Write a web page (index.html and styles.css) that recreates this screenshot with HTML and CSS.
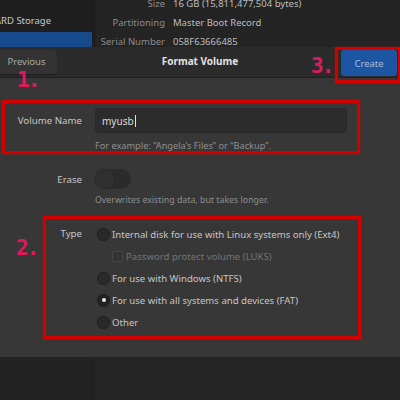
FILE: index.html
```html
<!DOCTYPE html>
<html>
<head>
<meta charset="utf-8">
<link rel="stylesheet" href="styles.css">
</head>
<body>
<div class="screen">
  <div class="under-top">
    <div class="side">
      <div class="side-item">ARD Storage</div>
      <div class="side-item selected"></div>
    </div>
    <div class="info">
      <div class="info-row"><span class="k">Size</span><span class="v">16 GB (15,811,477,504 bytes)</span></div>
      <div class="info-row"><span class="k">Partitioning</span><span class="v">Master Boot Record</span></div>
      <div class="info-row"><span class="k">Serial Number</span><span class="v">058F63666485</span></div>
    </div>
  </div>

  <div class="dialog">
    <div class="header">
      <div class="btn prev">Previous</div>
      <div class="title">Format Volume</div>
      <div class="btn create">Create</div>
    </div>
    <div class="body">
      <div class="row">
        <div class="label">Volume Name</div>
        <div class="entry">myusb<span class="caret"></span></div>
      </div>
      <div class="hint first">For example: “Angela’s Files” or “Backup”.</div>

      <div class="row erase">
        <div class="label">Erase</div>
        <div class="switch"><span class="knob"></span></div>
      </div>
      <div class="hint second">Overwrites existing data, but takes longer.</div>

      <div class="type">
        <div class="label type-label">Type</div>
        <div class="options">
          <div class="opt"><span class="radio"></span>Internal disk for use with Linux systems only (Ext4)</div>
          <div class="opt sub disabled"><span class="check"></span>Password protect volume (LUKS)</div>
          <div class="opt"><span class="radio"></span>For use with Windows (NTFS)</div>
          <div class="opt"><span class="radio on"></span>For use with all systems and devices (FAT)</div>
          <div class="opt"><span class="radio"></span>Other</div>
        </div>
      </div>
    </div>
  </div>

  <div class="under-bottom">
    <div class="side"></div>
    <div class="main"></div>
  </div>

  <div class="mark box1"></div>
  <div class="mark box2"></div>
  <div class="mark box3"></div>
  <div class="num n1">1.</div>
  <div class="num n2">2.</div>
  <div class="num n3">3.</div>
</div>
</body>
</html>
```

FILE: styles.css
```css
html, body {
  margin: 0;
  padding: 0;
  background: #252525;
}
.screen {
  position: relative;
  width: 400px;
  height: 400px;
  overflow: hidden;
  font-family: "Noto Sans", "DejaVu Sans", sans-serif;
}
.under-top {
  display: grid;
  grid-template-columns: 95px 1fr;
  height: 47px;
  overflow: hidden;
}
.under-top .side {
  background: #1f1f1f;
  border-right: 1px solid #1a1a1a;
  display: flex;
  flex-direction: column;
  justify-content: flex-end;
  padding-bottom: 2px;
}
.side-item {
  height: 17px;
  line-height: 17px;
  font-size: 9.5px;
  color: #c8c8c8;
  margin-left: -5px;
  padding-bottom: 3px;
}
.side-item.selected {
  background: #174a8c;
  margin-left: 0;
  margin-right: 2px;
  height: 17px;
  padding-bottom: 0;
}
.info {
  background: #242424;
  margin-top: -6px;
}
.info-row {
  display: flex;
  height: 19px;
  align-items: center;
  font-size: 9.5px;
}
.info-row .k {
  width: 70px;
  text-align: right;
  color: #8c8c8c;
  padding-right: 8px;
}
.info-row .v {
  color: #bdbdbd;
}

.dialog {
  background: #373737;
}
.header {
  height: 30px;
  background: #2b2b2b;
  border-bottom: 1px solid #1f1f1f;
  display: grid;
  grid-template-columns: 1fr auto 1fr;
  align-items: center;
}
.btn {
  font-size: 9.5px;
  border-radius: 4px;
  display: flex;
  align-items: center;
  justify-content: center;
}
.prev {
  justify-self: start;
  width: 61px;
  height: 24px;
  margin-left: -4px;
  margin-top: -1px;
  background: #333333;
  color: #a8a8a8;
  box-shadow: 0 1px 1px rgba(0,0,0,0.3);
}
.title {
  font-size: 10px;
  font-weight: bold;
  color: #e2e2e2;
  margin-top: -2px;
}
.create {
  justify-self: end;
  width: 56px;
  height: 26px;
  margin-right: 3px;
  margin-top: 2px;
  background: #1c55a1;
  color: #a9bfdc;
  border-radius: 3px;
}

.body {
  height: 279px;
  box-sizing: border-box;
  padding-top: 30px;
}
.row {
  display: flex;
  align-items: center;
}
.label {
  width: 95px;
  box-sizing: border-box;
  padding-right: 13px;
  text-align: right;
  font-size: 9.7px;
  color: #c6c6c6;
  flex-shrink: 0;
}
.entry {
  width: 252px;
  height: 25px;
  box-sizing: border-box;
  background: #2c2c2c;
  border: 1px solid #2a2a2a;
  border-radius: 3px;
  padding-left: 6px;
  display: flex;
  align-items: center;
  font-size: 10px;
  color: #dcdcdc;
}
.caret {
  width: 1px;
  height: 12px;
  background: #e0e0e0;
  margin-left: 1px;
}
.hint {
  margin-left: 95px;
  font-size: 8.8px;
  line-height: 12px;
  color: #8e8e8e;
}
.hint.first { margin-top: 7px; font-size: 9.2px; }
.row.erase { margin-top: 17px; }
.hint.second { margin-top: 5px; }
.switch {
  width: 36px;
  height: 20px;
  border-radius: 10px;
  background: #2b2b2b;
  display: flex;
  align-items: center;
}
.knob {
  width: 20px;
  height: 20px;
  border-radius: 50%;
  background: #2f2f2f;
  box-shadow: 0 0 1px #1a1a1a;
}
.type {
  display: flex;
  margin-top: 17px;
}
.type-label {
  height: 22px;
  line-height: 22px;
}
.options {
  margin-left: 2px;
}
.opt {
  height: 22px;
  display: flex;
  align-items: center;
  font-size: 9.6px;
  color: #c6c6c6;
  white-space: nowrap;
}
.radio {
  width: 13px;
  height: 13px;
  border-radius: 50%;
  background: #2a2a2a;
  box-shadow: inset 0 0 0 1px #222;
  margin-right: 2px;
  display: flex;
  align-items: center;
  justify-content: center;
  flex-shrink: 0;
}
.radio.on {
  background: #222;
}
.radio.on::after {
  content: "";
  width: 4px;
  height: 4px;
  border-radius: 50%;
  background: #e8e8e8;
}
.opt.sub { padding-left: 15px; }
.opt.disabled { color: #747474; }
.check {
  width: 9px;
  height: 9px;
  border: 1px solid #474747;
  background: #333;
  border-radius: 2px;
  margin-right: 3px;
}

.under-bottom {
  display: grid;
  grid-template-columns: 95px 1fr;
  height: 43px;
  box-shadow: inset 0 2px 2px rgba(0,0,0,0.25);
}
.under-bottom .side { background: #222222; }
.under-bottom .main { background: #252525; }

.mark {
  position: absolute;
  border: 3px solid #d40000;
  box-shadow: 0 0 2px rgba(220,0,0,0.6);
  box-sizing: border-box;
}
.box1 { left: 2px; top: 100px; width: 358px; height: 54px; }
.box2 { left: 43px; top: 216px; width: 318px; height: 123px; }
.box3 { left: 335px; top: 47px; width: 66px; height: 36px; }
.num {
  position: absolute;
  font-family: "DejaVu Sans Mono", monospace;
  font-weight: bold;
  font-size: 21px;
  line-height: 21px;
  color: #e3175b;
  letter-spacing: -2px;
}
.n1 { left: 17px; top: 70px; }
.n2 { left: 16px; top: 238px; }
.n3 { left: 311px; top: 56px; }
```
